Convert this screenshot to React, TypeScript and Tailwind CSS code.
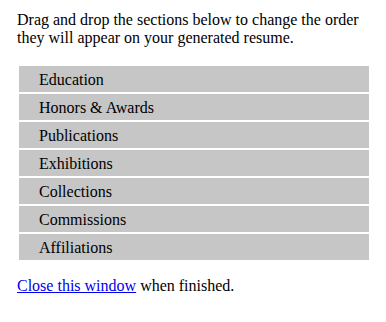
const sections = [
  "Education",
  "Honors & Awards",
  "Publications",
  "Exhibitions",
  "Collections",
  "Commissions",
  "Affiliations",
];

export default function App() {
  return (
    <div className="w-[386px] h-[322px] bg-white px-[17px] pt-[11px] font-['Liberation_Serif',serif] text-[16px] leading-[18px] text-black">
      <p className="w-[355px]">
        Drag and drop the sections below to change the order they will appear
        on your generated resume.
      </p>

      <ul className="mt-[19px] ml-[2px] flex w-[350px] flex-col gap-[2px]">
        {sections.map((name) => (
          <li
            key={name}
            className="flex h-[26px] items-center bg-[#c6c6c6] pl-[20px] pt-[1px] cursor-move"
          >
            {name}
          </li>
        ))}
      </ul>

      <p className="mt-[17px]">
        <a href="#" className="text-[#0000ee] underline">
          Close this window
        </a>{" "}
        when finished.
      </p>
    </div>
  );
}
